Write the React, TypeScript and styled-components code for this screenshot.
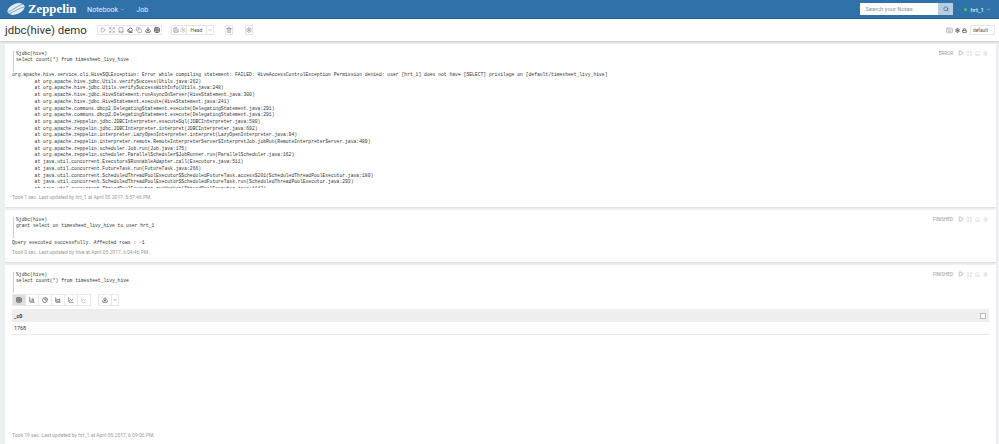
import React from "react";
import styled, { createGlobalStyle } from "styled-components";
import {
  BarChart3,
  Book,
  ChevronDown,
  Copy,
  Download,
  Eraser,
  Expand,
  Grid2x2,
  Keyboard,
  LineChart,
  Lock,
  PieChart,
  Play,
  Search,
  Settings,
  Table,
  Trash2,
  AreaChart,
  Save,
} from "lucide-react";

const GlobalStyle = createGlobalStyle`
  html, body { margin: 0; padding: 0; background: #ecf0f1; overflow: hidden; }
  body { width: 999px; height: 444px; font-family: "Roboto", "Liberation Sans", sans-serif; }
`;

const Page = styled.div`
  width: 999px;
  height: 444px;
  display: flex;
  flex-direction: column;
  overflow: hidden;
`;

const Nav = styled.nav`
  height: 19px;
  background: #3071a9;
  border-bottom: 1px solid #285f8f;
  box-sizing: border-box;
  display: flex;
  align-items: center;
  color: #fff;
  flex-shrink: 0;
`;

const Brand = styled.div`
  display: flex;
  align-items: center;
  gap: 3px;
  margin-left: 7px;
  font-family: "Liberation Serif", serif;
  font-weight: 700;
  font-size: 12.8px;
  width: 80px;
`;

const NavLink = styled.span`
  font-size: 7.2px;
  margin-right: 11px;
  display: flex;
  align-items: center;
  gap: 2px;
  color: #e6eef5;
`;

const NavRight = styled.div`
  margin-left: auto;
  display: flex;
  align-items: center;
  margin-right: 8px;
`;

const SearchBox = styled.div`
  width: 78px;
  height: 12px;
  background: #fff;
  font-size: 5.8px;
  color: #8a8f94;
  padding-left: 5px;
  box-sizing: border-box;
  line-height: 12px;
`;

const SearchButton = styled.div`
  width: 15px;
  height: 12px;
  background: #b8cde0;
  color: #2d5f8c;
  display: flex;
  align-items: center;
  justify-content: center;
`;

const UserDot = styled.span`
  width: 3px;
  height: 3px;
  border-radius: 50%;
  background: #2fe02f;
  margin: 0 3px 0 11px;
`;

const UserName = styled.span`
  font-size: 6px;
  display: flex;
  align-items: center;
  gap: 2px;
`;

const ActionBar = styled.div`
  height: 22px;
  background: #fff;
  box-shadow: 0 1px 2px rgba(0, 0, 0, 0.18);
  display: flex;
  align-items: center;
  flex-shrink: 0;
  padding-left: 5px;
  position: relative;
`;

const Title = styled.h1`
  margin: 0;
  font-size: 11.4px;
  font-weight: 400;
  color: #333;
  width: 92px;
  white-space: nowrap;
`;

const BtnGroup = styled.div<{ $gap?: number }>`
  display: flex;
  height: 8px;
  border: 1px solid #e5e5e5;
  border-radius: 1px;
  margin-right: ${({ $gap }) => $gap ?? 0}px;
`;

const IconBtn = styled.span<{ $color?: string; $width?: number }>`
  width: ${({ $width }) => $width ?? 9}px;
  display: flex;
  align-items: center;
  justify-content: center;
  color: ${({ $color }) => $color ?? "#777"};
`;

const HeadLabel = styled.span`
  width: 19px;
  font-size: 5px;
  text-align: center;
  line-height: 8px;
  color: #555;
  border-left: 1px solid #e5e5e5;
  border-right: 1px solid #e5e5e5;
`;

const RightTools = styled.div`
  margin-left: auto;
  margin-right: 4px;
  display: flex;
  align-items: center;
  gap: 2px;
  color: #333;
`;

const DefaultSelect = styled.span`
  display: flex;
  align-items: center;
  justify-content: center;
  gap: 1px;
  width: 23px;
  height: 8px;
  margin-left: 1px;
  border: 1px solid #e5e5e5;
  font-size: 4.8px;
  color: #555;
`;

const Body = styled.main`
  flex: 1;
  display: flex;
  flex-direction: column;
  padding: 3px 3px 0 5px;
  gap: 3px;
`;

const Paragraph = styled.section<{ $height: number }>`
  height: ${({ $height }) => $height}px;
  flex-shrink: 0;
  background: #fff;
  position: relative;
  padding: 7px 7px 0 7px;
  box-sizing: border-box;
  display: flex;
  flex-direction: column;
  box-shadow: 0 1px 1px rgba(0, 0, 0, 0.06);
`;

const Controls = styled.div`
  position: absolute;
  top: 6px;
  right: 8px;
  display: flex;
  align-items: center;
  gap: 3px;
  color: #bbb;
`;

const Status = styled.span`
  font-size: 4.6px;
  color: #999;
  margin-right: 2px;
`;

const Editor = styled.pre`
  margin: 0 0 0 1px;
  padding: 0 0 0 2px;
  height: 21px;
  border-left: 1px solid #ccc;
  font-family: "Liberation Mono", monospace;
  font-size: 4.72px;
  line-height: 6px;
  color: #333;
  flex-shrink: 0;
`;

const Output = styled.pre<{ $gap: number; $height: number }>`
  margin: ${({ $gap }) => $gap}px 0 0 0;
  height: ${({ $height }) => $height}px;
  overflow: hidden;
  font-family: "Liberation Mono", monospace;
  font-size: 4.72px;
  line-height: 6.7px;
  color: #333;
  flex-shrink: 0;
`;

const Footer = styled.div`
  font-size: 5px;
  color: #999;
  position: absolute;
  left: 7px;
  bottom: 7px;
  white-space: nowrap;
`;

const ChartBar = styled.div`
  display: flex;
  margin: 1px 0 0 0;
  height: 11px;
  flex-shrink: 0;
`;

const ChartBtn = styled.span<{ $active?: boolean }>`
  width: 12px;
  height: 10px;
  margin-left: -1px;
  display: flex;
  align-items: center;
  justify-content: center;
  border: 1px solid #e8e8e8;
  background: ${({ $active }) => ($active ? "#dedede" : "#fff")};
  color: #444;
  box-sizing: content-box;
  &:first-child { margin-left: 0; }
`;

const DownloadBtn = styled(ChartBtn)`
  width: 12px;
  margin-left: 7px;
`;

const CaretBtn = styled(ChartBtn)`
  width: 6px;
`;

const TableHead = styled.div`
  margin: 4px 0 0 0;
  height: 13px;
  background: #eeeeee;
  display: flex;
  align-items: center;
  justify-content: space-between;
  padding: 0 3px 0 2px;
  font-size: 5.4px;
  font-weight: 700;
  color: #333;
  flex-shrink: 0;
`;

const ColumnMenu = styled.span`
  width: 4px;
  height: 4px;
  border: 1px solid #bbb;
  background: #f8f8f8;
`;

const TableCell = styled.div`
  height: 12px;
  border-bottom: 1px solid #e8e8e8;
  padding-left: 2px;
  font-size: 5.4px;
  line-height: 12px;
  color: #333;
  flex-shrink: 0;
`;

const ParagraphControls = ({ status }: { status: string }) => (
  <Controls>
    <Status>{status}</Status>
    <Play size={6} color="#3071a9" strokeWidth={1.5} />
    <Expand size={5} strokeWidth={1.5} />
    <Book size={5} strokeWidth={1.5} />
    <Settings size={5} strokeWidth={1.5} />
  </Controls>
);

const errorLog = `org.apache.hive.service.cli.HiveSQLException: Error while compiling statement: FAILED: HiveAccessControlException Permission denied: user [hrt_1] does not have [SELECT] privilege on [default/timesheet_livy_hive]
\tat org.apache.hive.jdbc.Utils.verifySuccess(Utils.java:262)
\tat org.apache.hive.jdbc.Utils.verifySuccessWithInfo(Utils.java:248)
\tat org.apache.hive.jdbc.HiveStatement.runAsyncOnServer(HiveStatement.java:300)
\tat org.apache.hive.jdbc.HiveStatement.execute(HiveStatement.java:241)
\tat org.apache.commons.dbcp2.DelegatingStatement.execute(DelegatingStatement.java:291)
\tat org.apache.commons.dbcp2.DelegatingStatement.execute(DelegatingStatement.java:291)
\tat org.apache.zeppelin.jdbc.JDBCInterpreter.executeSql(JDBCInterpreter.java:580)
\tat org.apache.zeppelin.jdbc.JDBCInterpreter.interpret(JDBCInterpreter.java:692)
\tat org.apache.zeppelin.interpreter.LazyOpenInterpreter.interpret(LazyOpenInterpreter.java:94)
\tat org.apache.zeppelin.interpreter.remote.RemoteInterpreterServer$InterpretJob.jobRun(RemoteInterpreterServer.java:489)
\tat org.apache.zeppelin.scheduler.Job.run(Job.java:175)
\tat org.apache.zeppelin.scheduler.ParallelScheduler$JobRunner.run(ParallelScheduler.java:162)
\tat java.util.concurrent.Executors$RunnableAdapter.call(Executors.java:511)
\tat java.util.concurrent.FutureTask.run(FutureTask.java:266)
\tat java.util.concurrent.ScheduledThreadPoolExecutor$ScheduledFutureTask.access$201(ScheduledThreadPoolExecutor.java:180)
\tat java.util.concurrent.ScheduledThreadPoolExecutor$ScheduledFutureTask.run(ScheduledThreadPoolExecutor.java:293)
\tat java.util.concurrent.ThreadPoolExecutor.runWorker(ThreadPoolExecutor.java:1142)`;

const ZeppelinLogo = () => (
  <svg width="18" height="14" viewBox="0 0 18 14">
    <ellipse cx="9" cy="7" rx="9" ry="5.2" transform="rotate(-22 9 7)" fill="#e4edf5" />
    <path d="M1 10 C6 8 10 4 16 2 M2 12 C7 10 12 6 17 5" stroke="#3071a9" strokeWidth="0.6" fill="none" />
  </svg>
);

export default function App() {
  return (
    <Page>
      <GlobalStyle />
      <Nav>
        <Brand>
          <ZeppelinLogo />
          Zeppelin
        </Brand>
        <NavLink>
          Notebook <ChevronDown size={5} />
        </NavLink>
        <NavLink>Job</NavLink>
        <NavRight>
          <SearchBox>Search your Notes</SearchBox>
          <SearchButton>
            <Search size={6} strokeWidth={2.5} />
          </SearchButton>
          <UserDot />
          <UserName>
            hrt_1 <ChevronDown size={5} />
          </UserName>
        </NavRight>
      </Nav>
      <ActionBar>
        <Title>jdbc(hive) demo</Title>
        <BtnGroup $gap={9}>
          <IconBtn><Play size={6} /></IconBtn>
          <IconBtn><Expand size={6} /></IconBtn>
          <IconBtn><Book size={6} /></IconBtn>
          <IconBtn $color="#333"><Eraser size={6} strokeWidth={3} /></IconBtn>
          <IconBtn><Copy size={6} /></IconBtn>
          <IconBtn $color="#333"><Download size={6} strokeWidth={3} /></IconBtn>
          <IconBtn $color="#333"><Grid2x2 size={6} strokeWidth={3} /></IconBtn>
        </BtnGroup>
        <BtnGroup $gap={11}>
          <IconBtn $width={7}><Save size={6} /></IconBtn>
          <IconBtn $width={7} $color="#aaa"><Settings size={6} /></IconBtn>
          <HeadLabel>Head</HeadLabel>
          <IconBtn $width={6} $color="#333"><ChevronDown size={4} /></IconBtn>
        </BtnGroup>
        <BtnGroup $gap={12}>
          <IconBtn $width={6}><Trash2 size={6} /></IconBtn>
        </BtnGroup>
        <BtnGroup>
          <IconBtn $width={6}><Settings size={6} /></IconBtn>
        </BtnGroup>
        <RightTools>
          <Keyboard size={7} color="#999" />
          <Settings size={5} strokeWidth={3} />
          <Lock size={5} strokeWidth={3} />
          <DefaultSelect>
            default <ChevronDown size={3} />
          </DefaultSelect>
        </RightTools>
      </ActionBar>
      <Body>
        <Paragraph $height={163}>
          <ParagraphControls status="ERROR" />
          <Editor>{"%jdbc(hive)\nselect count(*) from timesheet_livy_hive"}</Editor>
          <Output $gap={0} $height={116}>{errorLog}</Output>
          <Footer>Took 1 sec. Last updated by hrt_1 at April 05 2017, 5:57:46 PM.</Footer>
        </Paragraph>
        <Paragraph $height={52}>
          <ParagraphControls status="FINISHED" />
          <Editor>{"%jdbc(hive)\ngrant select on timesheet_livy_hive to user hrt_1"}</Editor>
          <Output $gap={2} $height={8}>Query executed successfully. Affected rows : -1</Output>
          <Footer>Took 0 sec. Last updated by hive at April 05 2017, 6:04:46 PM.</Footer>
        </Paragraph>
        <Paragraph $height={180}>
          <ParagraphControls status="FINISHED" />
          <Editor>{"%jdbc(hive)\nselect count(*) from timesheet_livy_hive"}</Editor>
          <ChartBar>
            <ChartBtn $active><Table size={6} strokeWidth={2.5} /></ChartBtn>
            <ChartBtn><BarChart3 size={6} strokeWidth={2.5} /></ChartBtn>
            <ChartBtn><PieChart size={6} strokeWidth={3} /></ChartBtn>
            <ChartBtn><AreaChart size={6} strokeWidth={2.5} /></ChartBtn>
            <ChartBtn><LineChart size={6} strokeWidth={2.5} /></ChartBtn>
            <ChartBtn><LineChart size={6} color="#aaa" /></ChartBtn>
            <DownloadBtn><Download size={6} strokeWidth={3} /></DownloadBtn>
            <CaretBtn><ChevronDown size={4} strokeWidth={3} /></CaretBtn>
          </ChartBar>
          <TableHead>
            _c0
            <ColumnMenu />
          </TableHead>
          <TableCell>1768</TableCell>
          <Footer>Took 19 sec. Last updated by hrt_1 at April 05 2017, 6:09:06 PM.</Footer>
        </Paragraph>
      </Body>
    </Page>
  );
}
